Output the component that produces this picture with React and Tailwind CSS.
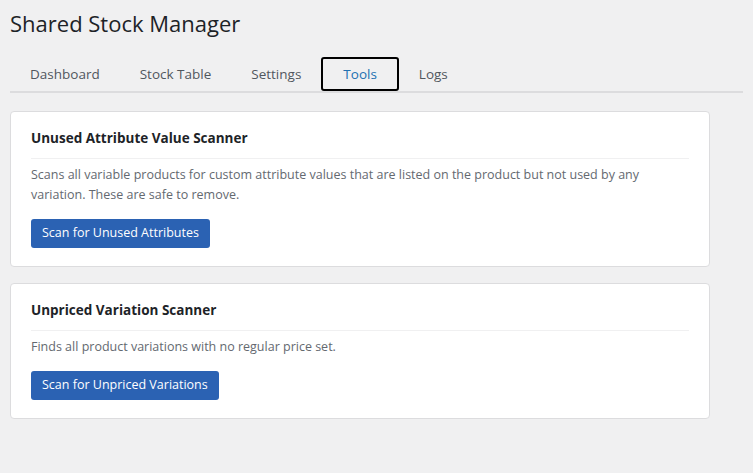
import React from 'react';

const tabs = ['Dashboard', 'Stock Table', 'Settings', 'Tools', 'Logs'];

const ToolCard = ({ title, description, button }) => (
  <div className="bg-white border border-[#dcdcde] rounded-[4px] px-5 pt-[16px] pb-[18px]">
    <h2 className="text-[13.5px] leading-[20px] font-bold text-[#1d2327]">{title}</h2>
    <div className="border-t border-[#f0f0f1] mt-[10px] mb-[6px]"></div>
    <p className="text-[12.5px] leading-[20px] text-[#646970]">{description}</p>
    <button className="mt-[14px] h-[29px] px-[11px] bg-[#2b62b3] text-white text-[12.5px] rounded-[3px]">
      {button}
    </button>
  </div>
);

export default function App() {
  return (
    <div className="min-h-screen bg-[#f0f0f1] font-['Open_Sans',sans-serif] px-[10px] pt-[7px]">
      <h1 className="text-[22px] leading-[32px] text-[#1d2327] font-normal">Shared Stock Manager</h1>
      <div className="mt-[18px] flex border-b-2 border-[#dcdcde]">
        {tabs.map((t) => (
          <div
            key={t}
            className={
              t === 'Tools'
                ? 'h-[34px] px-5 flex items-center text-[13.5px] text-[#2271b1] border-2 border-black rounded-[3px] -mb-[1px]'
                : 'h-[34px] px-5 flex items-center text-[13.5px] text-[#50575e]'
            }
          >
            {t}
          </div>
        ))}
      </div>
      <div className="w-[700px] mt-[18px] flex flex-col gap-[16px]">
        <ToolCard
          title="Unused Attribute Value Scanner"
          description="Scans all variable products for custom attribute values that are listed on the product but not used by any variation. These are safe to remove."
          button="Scan for Unused Attributes"
        />
        <ToolCard
          title="Unpriced Variation Scanner"
          description="Finds all product variations with no regular price set."
          button="Scan for Unpriced Variations"
        />
      </div>
    </div>
  );
}
